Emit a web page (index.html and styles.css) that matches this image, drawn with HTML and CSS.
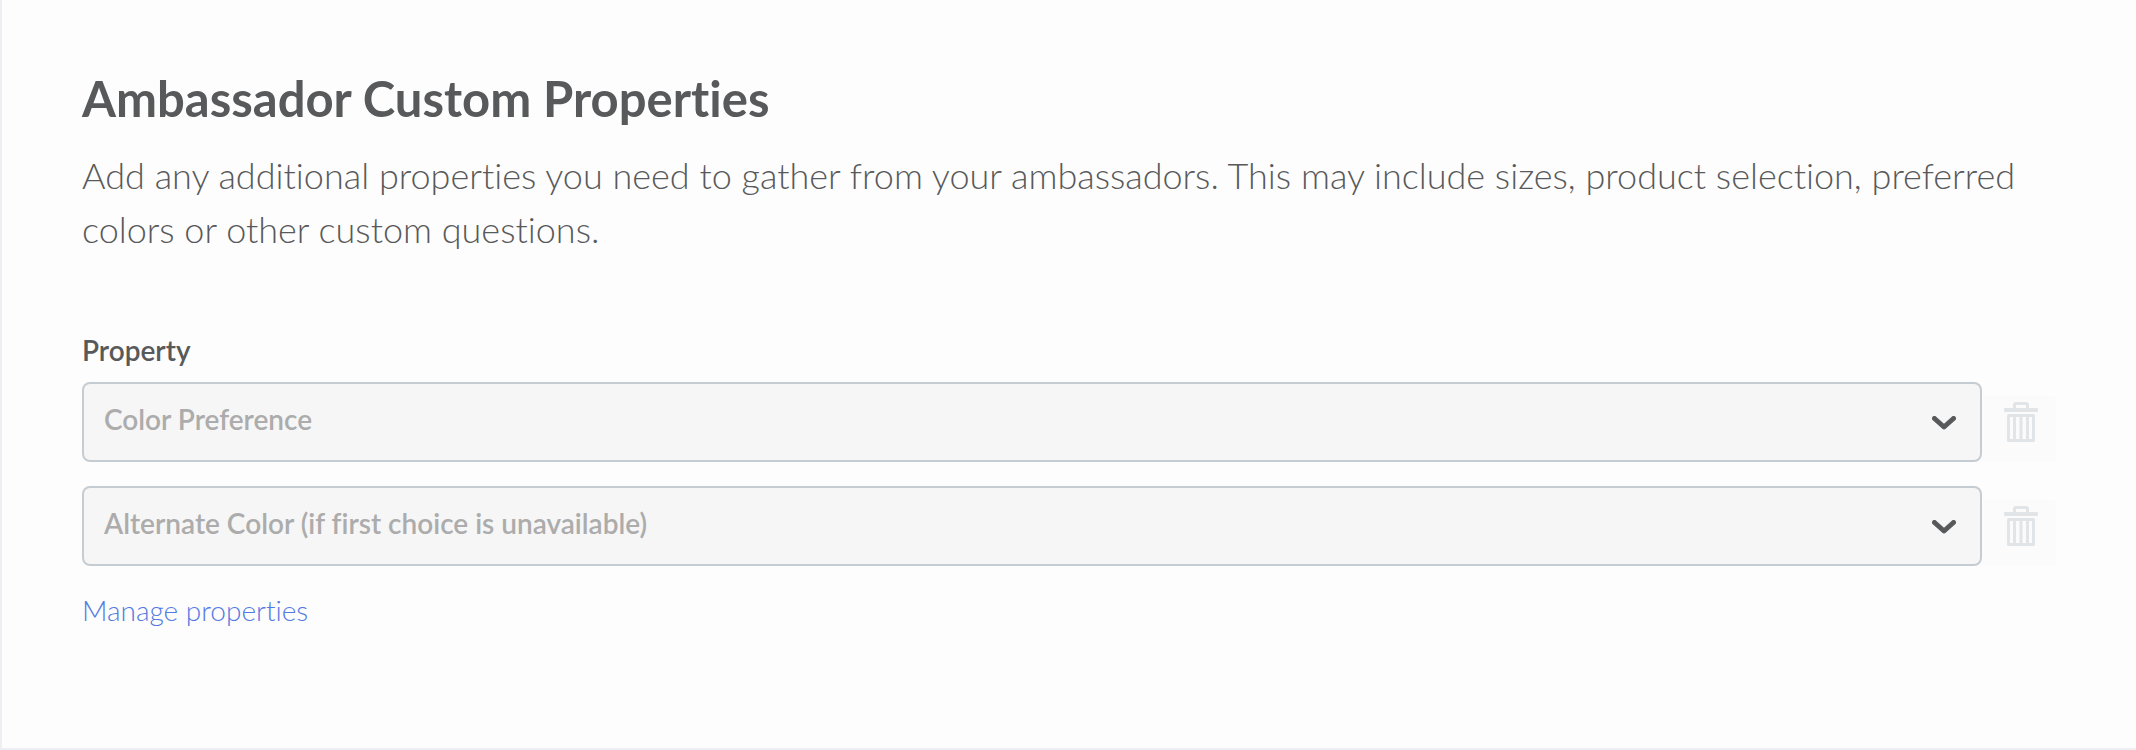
FILE: index.html
```html
<!DOCTYPE html>
<html lang="en">
<head>
  <meta charset="UTF-8">
  <title>Ambassador Custom Properties</title>
  <link rel="stylesheet" href="styles.css">
</head>
<body>
  <section class="panel">
    <h1>Ambassador Custom Properties</h1>
    <p class="description">Add any additional properties you need to gather from your ambassadors. This may include sizes, product selection, preferred colors or other custom questions.</p>

    <form class="properties">
      <label class="label" for="property-1">Property</label>
      <div class="row">
        <div class="select">
          <select id="property-1" disabled>
            <option>Color Preference</option>
          </select>
          <svg class="chevron" viewBox="0 0 24 14"><path d="M2.5 2.5 12 11l9.500-8.500"/></svg>
        </div>
        <button class="delete" type="button" aria-label="Delete property" disabled>
          <svg class="trash" viewBox="0 0 34 40">
            <path d="M10.500 7V3a1.500 1.500 0 0 1 1.500-1.500h10a1.500 1.500 0 0 1 1.500 1.500v4" fill="none" stroke="currentColor" stroke-width="3"/>
            <rect y="6" width="34" height="4" rx="1" fill="currentColor"/>
            <path d="M4.500 13.500h25v25h-25zM10.500 13v26M17 13v26M23.500 13v26" fill="none" stroke="currentColor" stroke-width="3" stroke-linejoin="round"/>
          </svg>
        </button>
      </div>
      <div class="row">
        <div class="select">
          <select id="property-2" aria-label="Property" disabled>
            <option>Alternate Color (if first choice is unavailable)</option>
          </select>
          <svg class="chevron" viewBox="0 0 24 14"><path d="M2.5 2.5 12 11l9.500-8.500"/></svg>
        </div>
        <button class="delete" type="button" aria-label="Delete property" disabled>
          <svg class="trash" viewBox="0 0 34 40">
            <path d="M10.500 7V3a1.500 1.500 0 0 1 1.500-1.500h10a1.500 1.500 0 0 1 1.500 1.500v4" fill="none" stroke="currentColor" stroke-width="3"/>
            <rect y="6" width="34" height="4" rx="1" fill="currentColor"/>
            <path d="M4.500 13.500h25v25h-25zM10.500 13v26M17 13v26M23.500 13v26" fill="none" stroke="currentColor" stroke-width="3" stroke-linejoin="round"/>
          </svg>
        </button>
      </div>
      <a class="manage" href="#">Manage properties</a>
    </form>
  </section>
</body>
</html>
```
FILE: styles.css
```css
* {
  box-sizing: border-box;
}
body {
  margin: 0;
  background: #fdfdfd;
  font-family: Lato, 'Open Sans', sans-serif;
  font-variant-ligatures: none;
  color: #58595a;
}
.panel {
  min-height: 100vh;
  padding: 68px 80px;
  border-left: 2px solid #eeeef3;
  border-bottom: 2px solid #eeeef3;
}
h1 {
  margin: 0 0 20px;
  font-size: 49px;
  line-height: 60px;
  font-weight: 700;
}
.description {
  margin: 0 0 76px;
  font-size: 36px;
  line-height: 54px;
  font-weight: 300;
}
.properties {
  display: flex;
  flex-direction: column;
  align-items: stretch;
  gap: 24px;
}
.label {
  margin-bottom: -10px;
  font-size: 28px;
  line-height: 36px;
  font-weight: 600;
}
.row {
  display: flex;
  align-items: flex-end;
}
.select {
  position: relative;
  flex: 1;
}
select {
  display: block;
  width: 100%;
  height: 80px;
  padding: 0 60px 6px 20px;
  appearance: none;
  border: 2px solid #c5ccd2;
  border-radius: 8px;
  background: #f6f6f6;
  font-family: inherit;
  font-size: 28px;
  font-weight: 600;
  font-variant-ligatures: none;
  color: #acacac;
  opacity: 1;
}
.chevron {
  position: absolute;
  top: 34px;
  right: 26px;
  width: 24px;
  height: 14px;
  fill: none;
  stroke: #58595a;
  stroke-width: 5;
  stroke-linecap: round;
  stroke-linejoin: round;
  pointer-events: none;
}
.delete {
  display: flex;
  justify-content: center;
  width: 74px;
  height: 66px;
  padding: 6px 0 0 4px;
  border: none;
  border-radius: 4px;
  background: #fbfbfb;
  color: #e1e5e8;
}
.trash {
  width: 34px;
  height: 40px;
}
.manage {
  align-self: flex-start;
  font-size: 28px;
  line-height: 40px;
  font-weight: 300;
  color: #5379e3;
  text-decoration: none;
}
.manage:hover {
  text-decoration: underline;
}
```
